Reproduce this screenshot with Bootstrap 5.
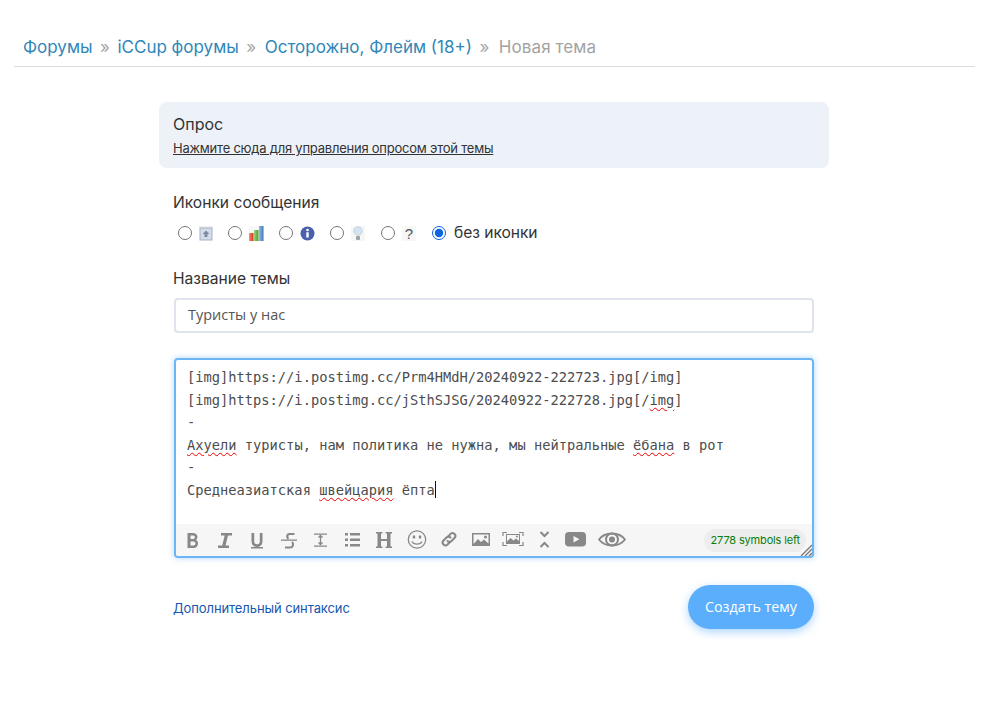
<!DOCTYPE html>
<html lang="ru"><head><meta charset="utf-8">
<link href="https://cdn.jsdelivr.net/npm/bootstrap@5.3.0/dist/css/bootstrap.min.css" rel="stylesheet">
<style>
html,body{background:#fff;overflow:hidden}
body{font-family:Inter,"Noto Sans",sans-serif;color:#333;height:704px}
.crumbs{margin:0 10px 0 14px;padding:34px 0 6px 9px;border-bottom:1px solid #dcdcdc;font-size:17px;line-height:26px;box-sizing:content-box}
.crumbs a{color:#2f87b8;text-decoration:none}
.crumbs .sep{color:#a5a5a5;margin:0 7.5px}
.crumbs a:nth-of-type(3){margin-left:1px}
.crumbs .cur{color:#a3a3a3;margin-left:2px;letter-spacing:.1px}
.formwrap{width:670px;margin:35px 0 0 159px}
.pollbox{background:#edf1f8;border-radius:8px;height:66px;padding:12px 14px}
.pollbox h3{font-size:16px;line-height:20px;font-weight:400;margin:0 0 4px;color:#333}
.pollbox a{font-size:13px;line-height:20px;color:#333;display:block;letter-spacing:-.23px}
.lab{font-size:15.6px;line-height:20px;color:#333;padding-left:14px}
.lab1{margin-top:25px}
.lab2{margin-top:25px}
.iconrow{padding-left:19px;margin-top:9px;height:22px}
.iconrow input{width:14px;height:14px;margin:0;appearance:auto;accent-color:#0d63e0}
.iconrow .cell{width:50px;gap:7px}
.iconrow .cell:nth-child(n+2){width:51px}
.iconrow label{font-size:15.6px;margin-left:8px;letter-spacing:-.05px;color:#333}
.qmark{display:block;width:14px;height:15px;background:#f7f7f7;font-family:"Liberation Sans",sans-serif;font-size:15px;line-height:15px;color:#555;text-align:center}
.titlein{margin:9px 15px 0;height:35px;border:2px solid #dfe3ee;border-radius:4px;padding:0 12px;font-family:"Open Sans",sans-serif;font-size:14.5px;line-height:30px;color:#555}
.editor{margin:25px 15px 0;height:200px;border:2px solid #6db6f5;border-radius:4px;box-shadow:0 0 6px rgba(109,182,245,.55);display:flex;flex-direction:column;position:relative;background:#fff}
.edtext{flex:1;padding:6px 11px 0;font-family:"DejaVu Sans Mono",monospace;font-size:13.72px;line-height:22.5px;color:#4d4d4d;white-space:pre}
.edtext u{text-decoration:underline wavy #e00;text-decoration-thickness:1px;text-underline-offset:2px}
.caret{display:inline-block;width:1px;height:17px;background:#111;vertical-align:-3px}
.bar{height:32px;background:#f6f6f6;position:relative;border-radius:0 0 3px 3px}
.bar svg{display:block;position:absolute;top:6px}
.count{position:absolute;right:6px;top:5px;height:23px;background:#ededed;border-radius:12px;padding:0 6px 0 7px;color:#0a7d0a;font-size:11px;line-height:23px;letter-spacing:-.15px}
.bar .grip{top:auto;right:0;bottom:0}
.foot{margin:27px 15px 0 14px;display:flex;justify-content:space-between;align-items:center}
.foot a{font-size:13px;color:#1556ae;text-decoration:none;letter-spacing:-.09px;margin-top:4px}
.sendbtn{width:126px;height:44px;border:0;border-radius:22px;background:#5baefc;color:#fff;font-family:"Open Sans",sans-serif;font-size:14.3px;box-shadow:0 3px 8px rgba(91,174,252,.5);padding:0}
</style></head><body>
<nav class="crumbs d-flex"><a href="#">Форумы</a><span class="sep">»</span><a href="#">iCCup форумы</a><span class="sep">»</span><a href="#">Осторожно, Флейм (18+)</a><span class="sep">»</span><span class="cur">Новая тема</span></nav>
<main class="formwrap">
<div class="pollbox"><h3>Опрос</h3><a href="#">Нажмите сюда для управления опросом этой темы</a></div>
<div class="lab lab1">Иконки сообщения</div>
<div class="iconrow d-flex align-items-center">
<div class="cell d-flex align-items-center"><input type="radio" name="ic"><svg width="14" height="15" viewBox="0 0 14 15"><rect width="14" height="2" fill="#f1f1f1"/><rect x="1" y="2" width="12" height="12" fill="#d5dce8" stroke="#a4b1c8"/><path d="M7 4.500 10.500 8H8.500v3h-3V8H3.500z" fill="#7c8aa3"/></svg></div>
<div class="cell d-flex align-items-center"><input type="radio" name="ic"><svg width="15" height="15" viewBox="0 0 15 15"><defs><linearGradient id="gr" x1="0" x2="1"><stop offset="0" stop-color="#ff8a70"/><stop offset="1" stop-color="#d8341a"/></linearGradient><linearGradient id="gg" x1="0" x2="1"><stop offset="0" stop-color="#9bd57e"/><stop offset="1" stop-color="#4b9c32"/></linearGradient><linearGradient id="gb" x1="0" x2="1"><stop offset="0" stop-color="#94bde6"/><stop offset="1" stop-color="#3f78b8"/></linearGradient></defs><rect width="15" height="15" fill="#f8f8f8"/><rect x="0" y="7" width="4.500" height="8" fill="url(#gr)"/><rect x="5" y="4" width="4.500" height="11" fill="url(#gg)"/><rect x="10" y="0" width="4.500" height="15" fill="url(#gb)"/></svg></div>
<div class="cell d-flex align-items-center"><input type="radio" name="ic"><svg width="15" height="15" viewBox="0 0 15 15"><circle cx="7.500" cy="7.500" r="7" fill="#4a60ac"/><rect x="6.300" y="6.300" width="2.400" height="5.200" fill="#fff"/><circle cx="7.500" cy="4" r="1.300" fill="#fff"/></svg></div>
<div class="cell d-flex align-items-center"><input type="radio" name="ic"><svg width="14" height="15" viewBox="0 0 14 15"><rect width="14" height="15" fill="#f7f7f7"/><circle cx="7" cy="5" r="4.300" fill="#d3e3f1" stroke="#bccbd8" stroke-width=".7"/><path d="M5 8h4l-.5 2h-3z" fill="#dcdfc8"/><rect x="5" y="10" width="4" height="4" rx="1" fill="#9aa6ad"/></svg></div>
<div class="cell d-flex align-items-center"><input type="radio" name="ic"><span class="qmark">?</span></div>
<div class="d-flex align-items-center"><input type="radio" name="ic" checked><label>без иконки</label></div>
</div>
<div class="lab lab2">Название темы</div>
<div class="titlein">Туристы у нас</div>
<div class="editor">
<div class="edtext">[img]https://i.postimg.cc/Prm4HMdH/20240922-222723.jpg[/img]
[img]https://i.postimg.cc/jSthSJSG/20240922-222728.jpg[/<u>img</u>]
-
<u>Ахуели</u> туристы, нам политика не нужна, мы нейтральные <u>ёбана</u> в рот
-
Среднеазиатская <u>швейцария</u> ёпта<span class="caret"></span></div>
<div class="bar">
<svg style="left:10px" width="14" height="20" viewBox="0 0 14 20"><path d="M1.500 3h6a4 4 0 0 1 2.600 7 4.400 4.400 0 0 1-2.200 8H1.500zM4.500 5.500v3.500h2.700a1.750 1.750 0 0 0 0-3.500zM4.500 11.500v4h3a2 2 0 0 0 0-4z" fill="#888" fill-rule="evenodd"/></svg>
<svg style="left:42px" width="14" height="20" viewBox="0 0 14 20"><path d="M3 3h11v2.500h-4L7.500 15.500h3.500V18H0v-2.500h4.200L6.700 5.500H3z" fill="#888"/></svg>
<svg style="left:74px" width="14" height="20" viewBox="0 0 14 20"><path d="M1.500 3h2.700v8.500a2.800 2.800 0 0 0 5.600 0V3h2.700v8.500a5.500 5.500 0 0 1-11 0zM1 17h12v1.500H1z" fill="#888"/></svg>
<svg style="left:105px" width="17" height="20" viewBox="0 0 17 20"><path d="M0 9.500h16v1.300H0z" fill="#888"/><path d="M13.500 4H8.500C6 4 5.500 7.500 7.500 9M11 12c2.200 2 1 5.500-2 5.500H4" fill="none" stroke="#888" stroke-width="2.200"/></svg>
<svg style="left:137px" width="15" height="20" viewBox="0 0 15 20"><path d="M1 3.500h13v1.300H1zM1 15.500h13v1.300H1z" fill="#888"/><path d="M7.500 5.500v9M5.500 7.500l2-2 2 2M5.500 12.500l2 2 2-2" fill="none" stroke="#888" stroke-width="1.300"/></svg>
<svg style="left:169px" width="15" height="20" viewBox="0 0 15 20"><path d="M0 3h3v2.500H0zM5 3h10v2.500H5zM0 8.500h3V11H0zM5 8.500h10V11H5zM0 14h3v2.500H0zM5 14h10v2.500H5z" fill="#888"/></svg>
<svg style="left:200px" width="16" height="20" viewBox="0 0 16 20"><path d="M0 2h6.500v1.600H5V9h6V3.600H9.500V2H16v1.600h-1.500v12.800H16V18H9.500v-1.600H11V11H5v5.400h1.500V18H0v-1.600h1.500V3.600H0z" fill="#888"/></svg>
<svg style="left:231px" width="20" height="20" viewBox="0 0 20 20"><circle cx="10" cy="9.500" r="8.700" fill="none" stroke="#888" stroke-width="1.300"/><ellipse cx="7" cy="7" rx="1.300" ry="1.700" fill="#888"/><ellipse cx="13" cy="7" rx="1.300" ry="1.700" fill="#888"/><path d="M5 11.500c1.500 3.500 8.500 3.500 10 0" fill="none" stroke="#888" stroke-width="1.300"/></svg>
<svg style="left:264px" width="18" height="20" viewBox="0 0 18 20"><g fill="none" stroke="#888" stroke-width="2" stroke-linecap="round"><path d="M8 6.500l2.500-2.500a2.800 2.800 0 0 1 4 4l-3 3a2.800 2.800 0 0 1-4 0"/><path d="M10 12l-2.500 2.500a2.800 2.800 0 0 1-4-4l3-3a2.800 2.800 0 0 1 4 0"/></g></svg>
<svg style="left:296px" width="18" height="20" viewBox="0 0 18 20"><rect x="0" y="3" width="18" height="13" fill="#888"/><path d="M1.500 4.500h15v9l-4.500-4-3 2.500-3-3-4.500 5z" fill="#f6f6f6"/><circle cx="13.500" cy="7" r="1.500" fill="#888"/></svg>
<svg style="left:326px" width="22" height="20" viewBox="0 0 22 20"><path d="M1 6V2.500h4M17 2.500h4V6M1 12v3.500h4M17 15.500h4V12" fill="none" stroke="#888" stroke-width="1.200"/><path fill="#888" d="M4 4h14v10H4z"/><path d="M5 5h12v6l-3-2.500-2.500 2-3-2.500L5 11.500z" fill="#f6f6f6"/><circle cx="15" cy="6.500" r="1" fill="#888"/></svg>
<svg style="left:362px" width="13" height="20" viewBox="0 0 13 20"><path d="M2.500 2l4 4 4-4M2.500 17l4-4 4 4" fill="none" stroke="#888" stroke-width="2"/></svg>
<svg style="left:389px" width="22" height="20" viewBox="0 0 22 20"><rect x="0" y="2" width="21" height="14.500" rx="4" fill="#888"/><path d="M8.500 6l6 3.200-6 3.200z" fill="#f6f6f6"/></svg>
<svg style="left:422px" width="28" height="20" viewBox="0 0 28 20"><path d="M1 9.500C7 1.500 21 1.500 27 9.500 21 17.500 7 17.500 1 9.500z" fill="none" stroke="#888" stroke-width="1.800"/><circle cx="14" cy="9.500" r="6" fill="none" stroke="#888" stroke-width="2"/><circle cx="14" cy="9.500" r="3" fill="#888"/></svg>
<span class="count">2778 symbols left</span>
<svg class="grip" width="12" height="12" viewBox="0 0 12 12"><path d="M12 1 1 12M12 5 5 12M12 9 9 12" stroke="#777" stroke-width="1.300"/></svg>
</div></div>
<div class="foot"><a href="#">Дополнительный синтаксис</a><button class="btn sendbtn" type="button">Создать тему</button></div>
</main>
<script src="https://cdn.jsdelivr.net/npm/bootstrap@5.3.0/dist/js/bootstrap.bundle.min.js"></script>
</body></html>
